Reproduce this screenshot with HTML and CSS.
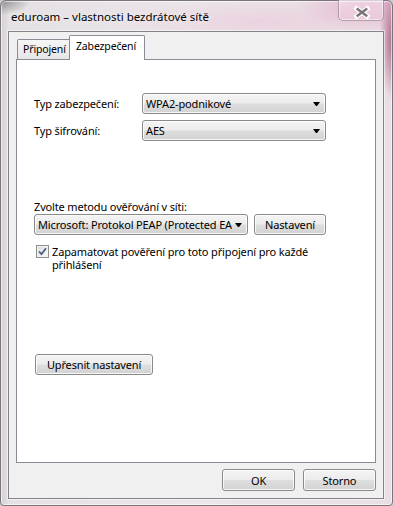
FILE: index.html
```html
<!DOCTYPE html>
<html lang="cs">
<head>
<meta charset="utf-8">
<title>eduroam – vlastnosti bezdrátové sítě</title>
<link rel="stylesheet" href="styles.css">
</head>
<body>
<div class="window">
  <div class="titlebar">
    <span class="title">eduroam – vlastnosti bezdrátové sítě</span>
    <div class="close">
      <svg width="46" height="20" viewBox="0 0 46 20">
        <path d="M18.5 8.5 L29.5 16.5 M29.5 8.5 L18.5 16.5" stroke="#ffffff" stroke-width="5" stroke-linecap="square" fill="none"/>
        <path d="M18.5 8.5 L29.5 16.5 M29.5 8.5 L18.5 16.5" stroke="#7a7478" stroke-width="2.6" stroke-linecap="butt" fill="none"/>
      </svg>
    </div>
  </div>
  <div class="client">
    <div class="tabs">
      <div class="tab">Připojení</div>
      <div class="tab active">Zabezpečení</div>
    </div>
    <div class="panel">
      <div class="row">
        <span class="label">Typ zabezpečení:</span>
        <div class="combo combo-type"><span class="combo-text">WPA2-podnikové</span><span class="arrow"></span></div>
      </div>
      <div class="row row-second">
        <span class="label">Typ šifrování:</span>
        <div class="combo combo-type"><span class="combo-text">AES</span><span class="arrow"></span></div>
      </div>
      <div class="method-label">Zvolte metodu ověřování v síti:</div>
      <div class="row method-row">
        <div class="combo combo-method"><span class="combo-text">Microsoft: Protokol PEAP (Protected EAP)</span><span class="arrow"></span></div>
        <div class="btn btn-settings">Nastavení</div>
      </div>
      <div class="check-row">
        <span class="checkbox">
          <svg width="9" height="9" viewBox="0 0 9 9"><path d="M1 4.5 L3.5 7.2 L8 1.2" stroke="#4a5d80" stroke-width="1.8" fill="none"/></svg>
        </span>
        <span class="check-text">Zapamatovat pověření pro toto připojení pro každé<br>přihlášení</span>
      </div>
      <div class="btn btn-advanced">Upřesnit nastavení</div>
    </div>
    <div class="footer">
      <div class="btn btn-dialog">OK</div>
      <div class="btn btn-dialog">Storno</div>
    </div>
  </div>
</div>
</body>
</html>
```

FILE: styles.css
```css
* { box-sizing: border-box; }
html, body { margin: 0; padding: 0; }
body {
  width: 393px;
  height: 506px;
  overflow: hidden;
  background: #cfc9cc;
  font-family: "Noto Sans", "Open Sans", sans-serif;
  font-size: 11px;
  letter-spacing: -0.15px;
  color: #000;
}
.window {
  width: 393px;
  height: 506px;
  border: 1px solid #7b7579;
  border-radius: 6px 6px 4px 4px;
  padding: 0 8px 6px 7px;
  display: flex;
  flex-direction: column;
  background:
    radial-gradient(ellipse 30px 14px at 0px 0px, rgba(80,80,80,0.55), transparent),
    radial-gradient(ellipse 14px 60px at 392px 40px, rgba(150,60,105,0.75), transparent),
    radial-gradient(ellipse 70px 26px at 365px 4px, rgba(225,150,190,0.55), transparent),
    radial-gradient(ellipse 160px 22px at 260px 20px, rgba(235,195,215,0.55), transparent),
    linear-gradient(to right, #d4d2d8 0px, #e4e0e3 8px, #ebe6e9 50%, #e8dfe4 100%);
  box-shadow: inset 0 0 0 1px rgba(255,255,255,0.6);
}
.titlebar {
  height: 30px;
  flex: 0 0 30px;
  display: flex;
  align-items: flex-start;
}
.title {
  padding: 8px 0 0 3px;
  line-height: 15px;
  font-size: 11.5px;
  letter-spacing: 0;
  color: #000;
  text-shadow: 0 0 6px rgba(255,255,255,0.9);
}
.close {
  margin-left: auto;
  margin-top: -1px;
  width: 46px;
  height: 21px;
  border: 1px solid rgba(120,110,115,0.55);
  border-top: none;
  border-radius: 0 0 5px 5px;
  background: linear-gradient(to bottom, rgba(255,255,255,0.35), rgba(240,200,220,0.45));
  box-shadow: inset 0 0 0 1px rgba(255,255,255,0.5);
  display: flex;
}
.close svg { display: block; }
.client {
  flex: 0 0 468px;
  height: 468px;
  border: 1px solid #85838a;
  background: #f0f0f0;
  padding: 3px 7px 0 7px;
  display: flex;
  flex-direction: column;
  box-shadow: 0 0 0 1px rgba(255,255,255,0.5);
}
.tabs {
  height: 24px;
  flex: 0 0 24px;
  display: flex;
  align-items: flex-end;
}
.tab {
  height: 20px;
  width: 54px;
  margin-left: 1px;
  border: 1px solid #898c95;
  border-bottom: none;
  border-radius: 2px 2px 0 0;
  background: linear-gradient(to bottom, #f6f6f6, #e6e6e6);
  padding-left: 5px;
  font-size: 10.5px;
  line-height: 18px;
  white-space: nowrap;
  overflow: hidden;
}
.tab.active {
  height: 25px;
  width: 76px;
  margin-left: -2px;
  margin-bottom: -1px;
  background: #fff;
  position: relative;
  z-index: 1;
  padding-left: 6px;
  line-height: 20px;
}
.panel {
  flex: 0 0 404px;
  height: 404px;
  border: 1px solid #898c95;
  background: #fff;
  padding: 33px 17px 0 17px;
  display: flex;
  flex-direction: column;
  align-items: flex-start;
}
.row {
  display: flex;
  align-items: center;
  height: 21px;
}
.row-second { margin-top: 6px; }
.label { width: 108px; white-space: nowrap; }
.combo {
  height: 21px;
  border: 1px solid #8a8a8a;
  border-radius: 3px;
  background: linear-gradient(to bottom, #f4f4f4 0%, #ececec 48%, #dedede 52%, #d2d2d2 100%);
  box-shadow: inset 0 0 0 1px rgba(255,255,255,0.8);
  display: flex;
  align-items: center;
  padding: 0 5px 0 3px;
}
.combo-type { width: 184px; }
.combo-method { width: 214px; }
.combo-text {
  flex: 1;
  overflow: hidden;
  white-space: nowrap;
  line-height: 15px;
}
.arrow {
  flex: 0 0 7px;
  width: 7px;
  height: 4px;
  margin-left: 3px;
  border-left: 3.5px solid transparent;
  border-right: 3.5px solid transparent;
  border-top: 4px solid #000;
}
.method-label {
  margin-top: 59px;
  height: 14px;
  line-height: 14px;
  white-space: nowrap;
}
.method-row { gap: 6px; }
.btn {
  height: 21px;
  border: 1px solid #8a8a8a;
  border-radius: 3px;
  background: linear-gradient(to bottom, #f4f4f4 0%, #ececec 48%, #dedede 52%, #d2d2d2 100%);
  box-shadow: inset 0 0 0 1px rgba(255,255,255,0.8);
  display: flex;
  align-items: center;
  justify-content: center;
  white-space: nowrap;
}
.btn-settings { width: 72px; }
.check-row {
  margin-top: 10px;
  display: flex;
  align-items: flex-start;
  padding-left: 2px;
}
.checkbox {
  width: 13px;
  height: 13px;
  border: 1px solid #8e8f8f;
  background: linear-gradient(135deg, #dcdcdc, #fbfbfb);
  box-shadow: inset 0 0 0 1px #f4f4f4;
  display: flex;
  align-items: center;
  justify-content: center;
  margin-right: 3px;
}
.checkbox svg { display: block; }
.check-text {
  line-height: 13px;
  white-space: nowrap;
}
.btn-advanced {
  margin-top: 83px;
  width: 118px;
  margin-left: 1px;
}
.footer {
  margin-top: 6px;
  display: flex;
  justify-content: flex-end;
  gap: 8px;
}
.btn-dialog { width: 73px; height: 22px; }
```
